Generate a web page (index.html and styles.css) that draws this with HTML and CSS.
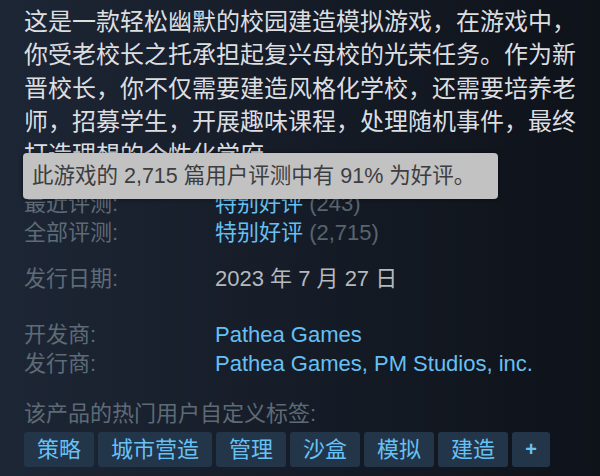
FILE: index.html
```html
<!DOCTYPE html>
<html lang="zh-CN">
<head>
  <meta charset="UTF-8" />
  <meta name="viewport" content="width=device-width, initial-scale=1.0"/>
  <title>游戏信息</title>
  <link rel="stylesheet" href="styles.css">
</head>
<body>

  <div class="description">这是一款轻松幽默的校园建造模拟游戏，在游戏中，你受老校长之托承担起复兴母校的光荣任务。作为新晋校长，你不仅需要建造风格化学校，还需要培养老师，招募学生，开展趣味课程，处理随机事件，最终打造理想的个性化学府。</div>

  <div class="reviews">
    <div class="row">
      <div class="label">最近评测:</div>
      <div class="value"><span class="link">特别好评</span> <span class="count">(243)</span></div>
    </div>
    <div class="row">
      <div class="label">全部评测:</div>
      <div class="value"><span class="link">特别好评</span> <span class="count">(2,715)</span></div>
    </div>
  </div>

  <div class="row date">
    <div class="label">发行日期:</div>
    <div class="value">2023 年 7 月 27 日</div>
  </div>

  <div class="devs">
    <div class="row">
      <div class="label">开发商:</div>
      <div class="value"><span class="link">Pathea Games</span></div>
    </div>
    <div class="row">
      <div class="label">发行商:</div>
      <div class="value"><span class="link">Pathea Games</span>, <span class="link">PM Studios, inc.</span></div>
    </div>
  </div>

  <div class="tags-label">该产品的热门用户自定义标签:</div>
  <div class="tags">
    <span class="tag">策略</span>
    <span class="tag">城市营造</span>
    <span class="tag">管理</span>
    <span class="tag">沙盒</span>
    <span class="tag">模拟</span>
    <span class="tag">建造</span>
    <span class="tag plus">+</span>
  </div>

  <div class="tooltip">此游戏的 2,715 篇用户评测中有 91% 为好评。</div>

</body>
</html>
```

FILE: styles.css
```css
* { box-sizing: border-box; }
html, body { height: 100%; }
body {
  margin: 0;
  padding: 5px 24px 0 24px;
  position: relative;
  overflow: hidden;
  font-family: 'Liberation Sans', 'Noto Sans CJK SC', sans-serif;
  background: linear-gradient(to right, #1d2635, #0e1219);
  color: #5e6b76;
  font-size: 22px;
  line-height: 29px;
}
.description {
  font-size: 24px;
  line-height: 33.3px;
  color: #dcdee0;
  height: 166.5px;
  overflow: hidden;
}
.reviews {
  margin-top: 17px;
}
.row {
  display: flex;
}
.label {
  width: 191px;
  flex-shrink: 0;
  color: #5e6b76;
}
.value { color: #5e6b76; }
.link { color: #66c0f4; }
.count { color: #58656f; }
.date {
  margin-top: 17px;
}
.date .value { color: #b4b9be; }
.devs {
  margin-top: 27px;
}
.devs .value { color: #66c0f4; }
.tags-label {
  margin-top: 21px;
  color: #5e6b76;
}
.tags {
  display: flex;
  gap: 4px;
  margin-top: 4px;
}
.tag {
  height: 35px;
  line-height: 35px;
  padding: 0 13px;
  font-size: 22px;
  color: #67c1f5;
  background: #233549;
  border-radius: 3px;
}
.tag.plus {
  width: 38px;
  padding: 0;
  text-align: center;
  font-weight: bold;
  font-size: 20px;
}
.tooltip {
  position: absolute;
  left: 23px;
  top: 153px;
  width: 475px;
  height: 46px;
  padding: 0 9px;
  font-size: 21.5px;
  line-height: 46px;
  color: #3d3d3f;
  background: #c2c2c2;
  border-radius: 4px;
  box-shadow: 0 0 4px rgba(0, 0, 0, 0.5);
  white-space: nowrap;
}
```
